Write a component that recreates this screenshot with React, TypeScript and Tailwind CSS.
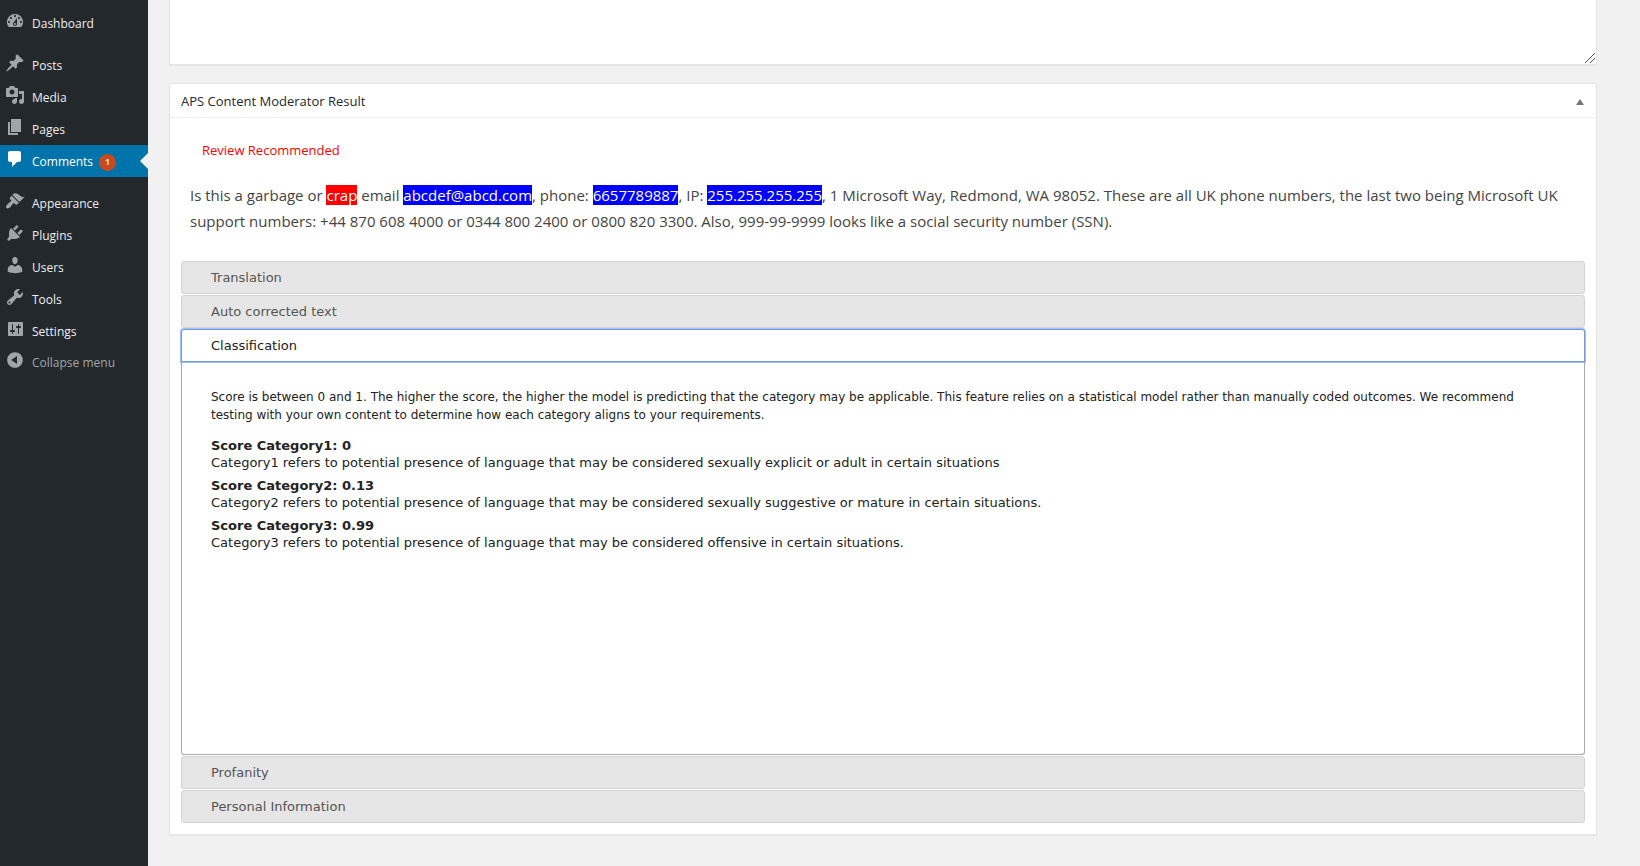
import { useState } from "react";
import type { ReactNode } from "react";

const icons = {
  dashboard:
    "M3.76 16h12.48A7.998 7.998 0 0 0 10 3a7.998 7.998 0 0 0-6.24 13zM10 4c.55 0 1 .45 1 1s-.45 1-1 1-1-.45-1-1 .45-1 1-1zM6 6c.55 0 1 .45 1 1s-.45 1-1 1-1-.45-1-1 .45-1 1-1zm8 0c.55 0 1 .45 1 1s-.45 1-1 1-1-.45-1-1 .45-1 1-1zm-5.37 5.55L12 7v6c0 1.1-.9 2-2 2s-2-.9-2-2c0-.57.24-1.08.63-1.45zM4 10c.55 0 1 .45 1 1s-.45 1-1 1-1-.45-1-1 .45-1 1-1zm12 0c.55 0 1 .45 1 1s-.45 1-1 1-1-.45-1-1 .45-1 1-1zm-5 3c0-.55-.45-1-1-1s-1 .45-1 1 .45 1 1 1 1-.45 1-1z",
  posts:
    "M10.44 3.02l1.82-1.82 6.36 6.35-1.83 1.82c-1.05-.68-2.48-.57-3.41.36l-.75.75c-.92.93-1.04 2.35-.35 3.41l-1.83 1.82-2.41-2.41-2.8 2.79c-.42.42-3.38 2.71-3.8 2.29s1.86-3.39 2.28-3.81l2.79-2.79L4.1 9.36l1.83-1.82c1.05.69 2.48.57 3.4-.36l.75-.75c.93-.92 1.05-2.35.36-3.41z",
  media:
    "M13 11V4c0-.55-.45-1-1-1h-1.67L9 1H5L3.67 3H2c-.55 0-1 .45-1 1v7c0 .55.45 1 1 1h10c.55 0 1-.45 1-1zM7 4.5c1.38 0 2.5 1.12 2.5 2.5S8.38 9.5 7 9.5 4.5 8.38 4.5 7 5.62 4.5 7 4.5zM14 6h5v10.5c0 1.38-1.12 2.5-2.5 2.5S14 17.88 14 16.5s1.12-2.5 2.5-2.5c.17 0 .34.02.5.05V9h-3V6zm-4 8.05V13h2v3.5c0 1.38-1.12 2.5-2.5 2.5S7 17.88 7 16.5 8.12 14 9.5 14c.17 0 .34.02.5.05z",
  pages: "M6 15V2h10v13H6zm-1 1h8v2H3V5h2v11z",
  comments:
    "M5 2h9c1.1 0 2 .9 2 2v7c0 1.1-.9 2-2 2h-2l-5 5v-5H5c-1.1 0-2-.9-2-2V4c0-1.1.9-2 2-2z",
  appearance:
    "M14.48 11.06L7.41 3.99l1.5-1.5c.5-.56 2.3-.47 3.51.32 1.21.8 1.43 1.28 2.91 2.1 1.18.64 2.45 1.26 4.45.85zm-.71.71L6.7 4.7 4.93 6.47c-.39.39-.39 1.02 0 1.41l1.06 1.06c.39.39.39 1.03 0 1.42-.6.6-1.43 1.11-2.21 1.69-.35.26-.7.53-1.01.84C1.43 14.23.4 16.08 1.4 17.07c.99 1 2.84-.03 4.18-1.36.31-.31.58-.66.85-1.02.57-.78 1.08-1.61 1.69-2.21.39-.39 1.02-.39 1.41 0l1.06 1.06c.39.39 1.02.39 1.41 0z",
  plugins:
    "M13.11 4.36L9.87 7.6 8 5.73l3.24-3.24c.35-.34 1.05-.2 1.56.32.52.51.66 1.21.31 1.55zm-8 1.77l.91-1.12 9.01 9.01-1.19.84c-.71.71-2.63 1.16-3.82 1.16H6.14L4.9 17.26c-.59.59-1.54.59-2.12 0-.59-.58-.59-1.53 0-2.12l1.24-1.24v-3.88c0-1.13.4-3.19 1.09-3.89zm7.26 3.97l3.24-3.24c.34-.35 1.04-.21 1.55.31.52.51.66 1.21.31 1.55l-3.24 3.25z",
  users:
    "M10 9.25c-2.27 0-2.73-3.44-2.73-3.44C7 4.02 7.82 2 9.97 2c2.16 0 2.98 2.02 2.71 3.81 0 0-.41 3.44-2.68 3.44zm0 2.57L12.72 10c2.39 0 4.52 2.33 4.52 4.53v2.49s-3.65 1.13-7.24 1.13c-3.65 0-7.24-1.13-7.24-1.13v-2.49c0-2.25 1.94-4.48 4.47-4.48z",
  tools:
    "M16.68 9.77c-1.34 1.34-3.3 1.67-4.95.99l-5.41 6.52c-.99.99-2.59.99-3.58 0s-.99-2.59 0-3.57l6.52-5.42c-.68-1.65-.35-3.61.99-4.95 1.28-1.28 3.12-1.62 4.72-1.06l-2.89 2.89 2.82 2.82 2.86-2.87c.53 1.58.18 3.39-1.08 4.65zM3.81 16.21c.4.39 1.04.39 1.43 0 .4-.4.4-1.04 0-1.43-.39-.4-1.03-.4-1.43 0-.39.39-.39 1.03 0 1.43z",
  settings:
    "M18 16V4c0-.55-.45-1-1-1H4c-.55 0-1 .45-1 1v12c0 .55.45 1 1 1h13c.55 0 1-.45 1-1zM8 11h1c.55 0 1 .45 1 1s-.45 1-1 1H8v1.5c0 .28-.22.5-.5.5s-.5-.22-.5-.5V13H6c-.55 0-1-.45-1-1s.45-1 1-1h1V5.5c0-.28.22-.5.5-.5s.5.22.5.5V11zm5-2h-1c-.55 0-1-.45-1-1s.45-1 1-1h1V5.5c0-.28.22-.5.5-.5s.5.22.5.5V7h1c.55 0 1 .45 1 1s-.45 1-1 1h-1v5.5c0 .28-.22.5-.5.5s-.5-.22-.5-.5V9z",
  collapse:
    "M10 2.16c4.33 0 7.84 3.51 7.84 7.84s-3.51 7.84-7.84 7.84S2.16 14.33 2.16 10 5.71 2.16 10 2.16zm2 11.72V6.12L6.18 9.97z",
};

type IconName = keyof typeof icons;

function Icon({ name }: { name: IconName }) {
  return (
    <svg viewBox="0 0 20 20" className="mb-[6px] size-5 shrink-0 fill-current" aria-hidden="true">
      <path fillRule="evenodd" d={icons[name]} />
    </svg>
  );
}

const menuGroups: { label: string; icon: IconName; count?: number }[][] = [
  [{ label: "Dashboard", icon: "dashboard" }],
  [
    { label: "Posts", icon: "posts" },
    { label: "Media", icon: "media" },
    { label: "Pages", icon: "pages" },
    { label: "Comments", icon: "comments", count: 1 },
  ],
  [
    { label: "Appearance", icon: "appearance" },
    { label: "Plugins", icon: "plugins" },
    { label: "Users", icon: "users" },
    { label: "Tools", icon: "tools" },
    { label: "Settings", icon: "settings" },
  ],
];

function Sidebar() {
  return (
    <nav aria-label="Main menu" className="w-[148px] shrink-0 bg-[#23282d] pt-[7px] text-[12px] leading-[18px]">
      <div className="flex flex-col gap-[10px]">
        {menuGroups.map((group) => (
          <ul key={group[0].label}>
            {group.map(({ label, icon, count }) => (
              <li key={label}>
                <a
                  href="#"
                  aria-current={count ? "page" : undefined}
                  className={
                    count
                      ? "relative flex h-8 items-center gap-[7px] bg-[#0073aa] pt-[2px] pl-[5px] text-white"
                      : "flex h-8 items-center gap-[7px] pt-[2px] pl-[5px] text-[#a0a5aa]"
                  }
                >
                  <Icon name={icon} />
                  <span className={count ? "font-medium text-white" : "font-medium text-[#eeeeee]"}>{label}</span>
                  {count && (
                    <>
                      <span className="-ml-px flex size-[17px] items-center justify-center rounded-full bg-[#ca4a1f] text-[9px] font-semibold">
                        {count}
                      </span>
                      <span className="absolute top-2 right-0 border-y-8 border-r-8 border-y-transparent border-r-[#f1f1f1]" />
                    </>
                  )}
                </a>
              </li>
            ))}
          </ul>
        ))}
      </div>
      <button type="button" className="flex h-[30px] w-full items-center gap-[7px] pt-[2px] pl-[5px] text-[#a0a5aa]">
        <Icon name="collapse" />
        Collapse menu
      </button>
    </nav>
  );
}

function Mark({ tone, children }: { tone: "bad" | "personal"; children: ReactNode }) {
  return (
    <mark className={tone === "bad" ? "bg-[#ff0000] text-white" : "bg-[#0000ff] text-white"}>{children}</mark>
  );
}

const scores = [
  {
    title: "Score Category1: 0",
    text: "Category1 refers to potential presence of language that may be considered sexually explicit or adult in certain situations",
  },
  {
    title: "Score Category2: 0.13",
    text: "Category2 refers to potential presence of language that may be considered sexually suggestive or mature in certain situations.",
  },
  {
    title: "Score Category3: 0.99",
    text: "Category3 refers to potential presence of language that may be considered offensive in certain situations.",
  },
];

function Classification() {
  return (
    <div className="min-h-[393px] rounded-b-[3px] border border-t-0 border-[#aaaaaa] px-[29px] pt-[26px] text-[#222222]">
      <p className="text-[12px] leading-[18px]">
        Score is between 0 and 1. The higher the score, the higher the model is predicting that the category may be
        applicable. This feature relies on a statistical model rather than manually coded outcomes. We recommend testing
        with your own content to determine how each category aligns to your requirements.
      </p>
      <dl className="mt-[13px] flex flex-col gap-[6px] text-[13px] leading-[17px]">
        {scores.map(({ title, text }) => (
          <div key={title}>
            <dt className="font-bold">{title}</dt>
            <dd>{text}</dd>
          </div>
        ))}
      </dl>
    </div>
  );
}

const sections = ["Translation", "Auto corrected text", "Classification", "Profanity", "Personal Information"];

function Accordion() {
  const [open, setOpen] = useState("Classification");
  return (
    <div className="flex flex-col gap-px font-['Verdana','DejaVu_Sans',sans-serif]">
      {sections.map((name) => (
        <section key={name}>
          <h3>
            <button
              type="button"
              aria-expanded={open === name}
              onClick={() => setOpen(name)}
              className={
                open === name
                  ? "block h-[33px] w-full rounded-t-[3px] border border-[#7699d4] bg-white px-[29px] text-left text-[13px] text-[#212121] ring-1 ring-[#9dc0fa]"
                  : "block h-[33px] w-full rounded-[3px] border border-[#d3d3d3] bg-[#e6e6e6] px-[29px] text-left text-[13px] text-[#555555]"
              }
            >
              {name}
            </button>
          </h3>
          {open === name && name === "Classification" && <Classification />}
        </section>
      ))}
    </div>
  );
}

export default function App() {
  return (
    <div className="flex min-h-screen bg-[#f1f1f1] font-['Segoe_UI','Open_Sans',sans-serif] text-[#444444]">
      <Sidebar />
      <main className="min-w-0 flex-1 pr-[43px] pb-[31px] pl-[21px]">
        <div className="relative">
          <textarea
            aria-label="Comment"
            className="block h-[65px] w-full resize-none border border-t-0 border-[#e5e5e5] bg-white p-2 shadow-[0_1px_1px_rgba(0,0,0,0.04)] outline-none"
          />
          <svg
            viewBox="0 0 10 10"
            className="pointer-events-none absolute right-[2px] bottom-[2px] size-[10px] fill-none stroke-[#555555]"
            aria-hidden="true"
          >
            <path d="M0 10L10 0M5 10l5-5" />
          </svg>
        </div>
        <section className="mt-[18px] border border-[#e5e5e5] bg-white shadow-[0_1px_1px_rgba(0,0,0,0.04)]">
          <header className="flex h-[34px] items-center justify-between border-b border-[#eeeeee] pt-[2px] pr-3 pl-[11px]">
            <h2 className="text-[13px] font-medium text-[#23282d]">APS Content Moderator Result</h2>
            <button type="button" aria-label="Toggle panel" className="text-[#72777c]">
              <svg viewBox="0 0 8 6" className="h-[6px] w-2 fill-current" aria-hidden="true">
                <path d="M4 0l4 6H0z" />
              </svg>
            </button>
          </header>
          <div className="px-[11px] pb-[11px]">
            <p className="pt-[23px] pl-[21px] text-[13px] leading-[18px] text-[#ff0000]">
              Review Recommended
            </p>
            <p className="mt-[23px] px-[9px] pb-[27px] text-[15px] leading-[26px]">
              Is this a garbage or <Mark tone="bad">crap</Mark> email <Mark tone="personal">abcdef@abcd.com</Mark>,
              phone: <Mark tone="personal">6657789887</Mark>, IP: <Mark tone="personal">255.255.255.255</Mark>, 1
              Microsoft Way, Redmond, WA 98052. These are all UK phone numbers, the last two being Microsoft UK support
              numbers: +44 870 608 4000 or 0344 800 2400 or 0800 820 3300. Also, 999-99-9999 looks like a social
              security number (SSN).
            </p>
            <Accordion />
          </div>
        </section>
      </main>
    </div>
  );
}
